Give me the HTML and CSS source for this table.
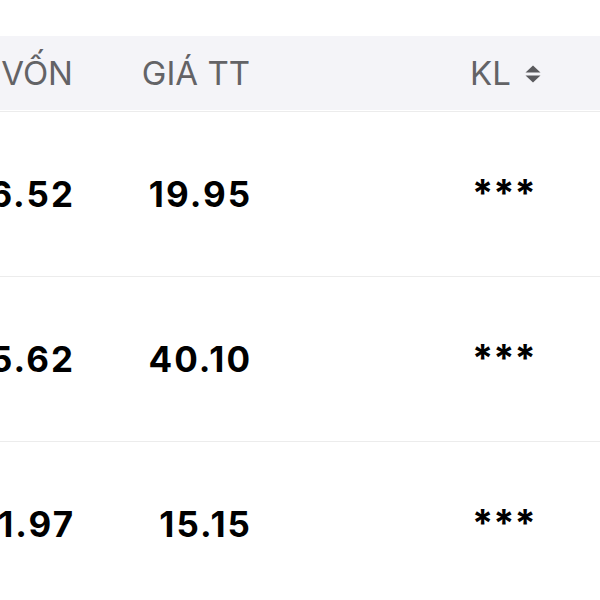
FILE: index.html
```html
<!DOCTYPE html>
<html lang="vi">
<head>
<meta charset="utf-8">
<link rel="stylesheet" href="styles.css">
</head>
<body>
<div class="table">
  <div class="head">
    <div class="c1">VỐN</div>
    <div class="c2">GIÁ TT</div>
    <div class="c3">KL
      <svg class="sort" width="16" height="18" viewBox="0 0 16 18"><path d="M8 0.5 L15.5 7.5 H0.5 Z" fill="#5a5a5e"/><path d="M8 17.5 L15.5 10.5 H0.5 Z" fill="#5a5a5e"/></svg>
    </div>
  </div>
  <div class="row">
    <div class="c1 num">6.52</div>
    <div class="c2 num">19.95</div>
    <div class="c3 mask">***</div>
  </div>
  <div class="row">
    <div class="c1 num">5.62</div>
    <div class="c2 num">40.10</div>
    <div class="c3 mask">***</div>
  </div>
  <div class="row">
    <div class="c1 num">1.97</div>
    <div class="c2 num">15.15</div>
    <div class="c3 mask">***</div>
  </div>
</div>
</body>
</html>
```
FILE: styles.css
```css
html, body {
  margin: 0;
  padding: 0;
  background: #fff;
  width: 600px;
  height: 600px;
  overflow: hidden;
}
body {
  font-family: Inter, "Liberation Sans", sans-serif;
  padding-top: 36px;
  box-sizing: border-box;
}
.head, .row {
  display: grid;
  grid-template-columns: 73px 177px 222px 1fr;
  align-items: center;
}
.head {
  height: 74px;
  background: #f4f4f8;
  color: #636366;
  font-size: 33px;
  font-weight: 400;
  border-bottom: 1px solid #fff;
}
.row {
  height: 164px;
  border-top: 1px solid #ececec;
  font-size: 35px;
  font-weight: 700;
  color: #000;
}
.c1, .c2 {
  text-align: right;
  white-space: nowrap;
  direction: rtl;
}
.c1 { grid-column: 1; }
.c2 { grid-column: 2; }
.c3 {
  grid-column: 4;
  display: flex;
  align-items: center;
  gap: 14px;
  white-space: nowrap;
  margin-left: -2px;
}
.num {
  letter-spacing: 2px;
  margin-right: -2px;
}
.mask {
  font-size: 38px;
  letter-spacing: 0;
  margin-top: -2px;
  margin-left: 0;
}
.sort {
  display: block;
  margin-top: 2px;
}
```
